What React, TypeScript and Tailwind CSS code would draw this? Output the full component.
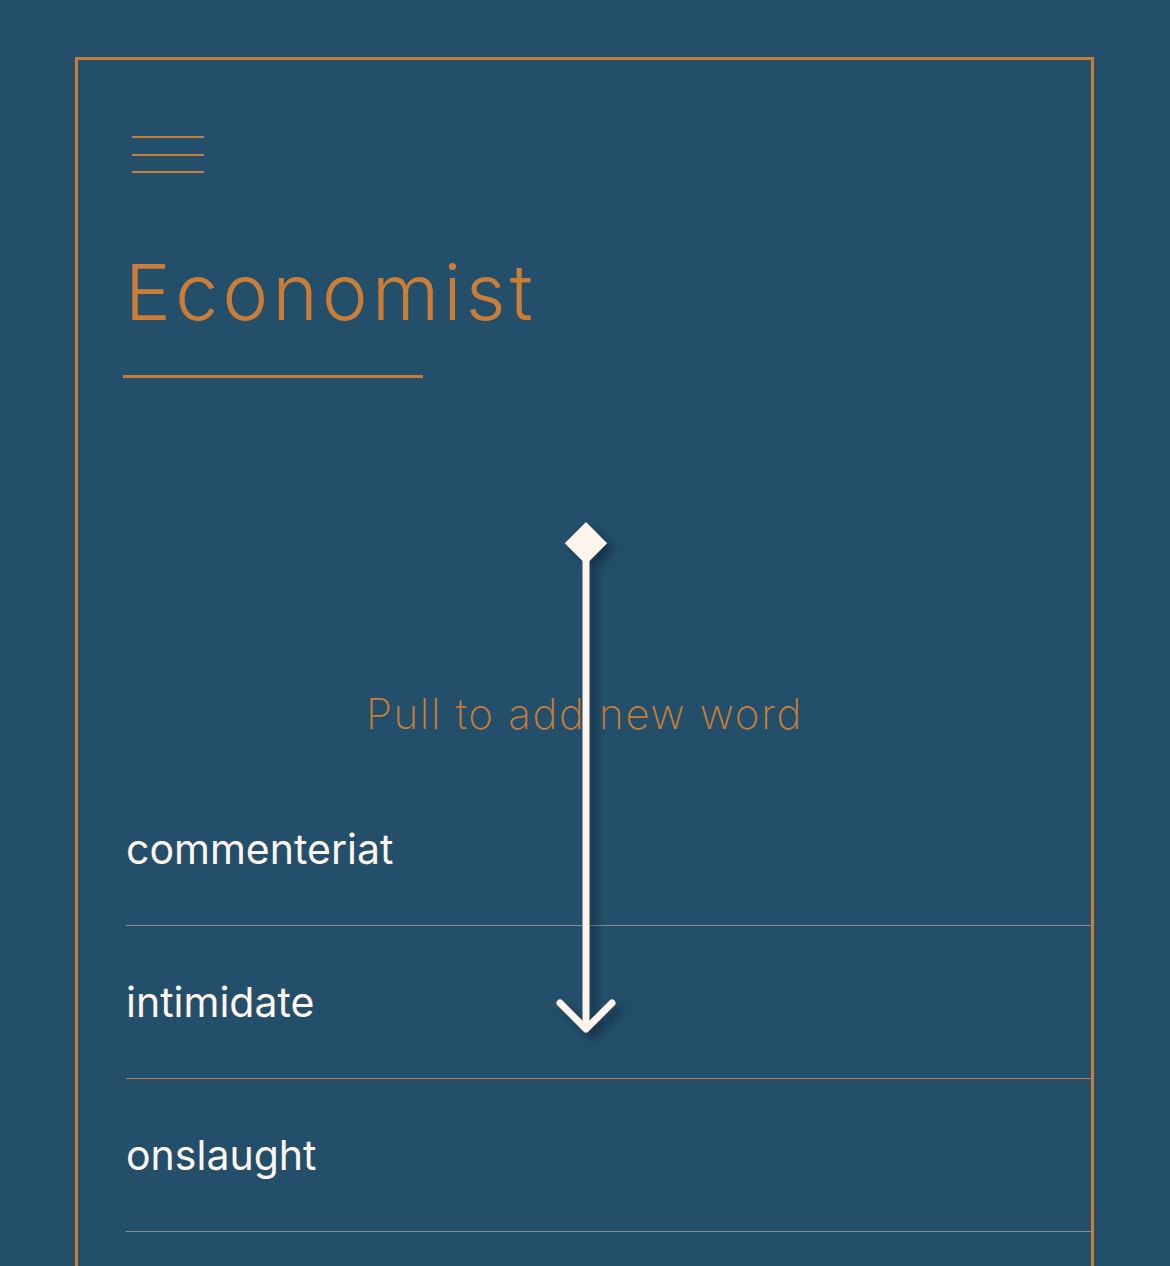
import React from 'react'

const words = [
  { text: 'commenteriat', line: 'bg-[#8a8f8e]' },
  { text: 'intimidate', line: 'bg-[#c97d37]' },
  { text: 'onslaught', line: 'bg-[#8a8f8e]' },
]

function PullArrow() {
  return (
    <svg
      className="absolute left-[473px] top-[460px] drop-shadow-[7px_6px_4px_rgba(10,30,45,0.55)]"
      width="70"
      height="520"
      viewBox="0 0 70 520"
      fill="none"
    >
      <rect x="35" y="2" width="30" height="30" transform="rotate(45 35 2)" fill="#fdf4ec" />
      <line x1="35" y1="30" x2="35" y2="508" stroke="#fdf4ec" strokeWidth="7" />
      <polyline
        points="9,483 35,509 61,483"
        stroke="#fdf4ec"
        strokeWidth="7"
        strokeLinecap="round"
        strokeLinejoin="round"
      />
    </svg>
  )
}

export default function App() {
  return (
    <div className="h-[1266px] overflow-hidden bg-[#244f6a] pt-[57px] pl-[75px] pr-[76px] font-['Inter',sans-serif]">
      <div className="relative min-h-[1300px] border-[3px] border-[#c97d37] pt-[76px]">
        <button className="ml-[54px] flex w-[72px] flex-col gap-[15.5px]">
          <span className="h-[2px] w-full bg-[#c97d37]" />
          <span className="h-[2px] w-full bg-[#c97d37]" />
          <span className="h-[2px] w-full bg-[#c97d37]" />
        </button>

        <h1 className="ml-[47px] mt-[81px] text-[77px] font-light leading-none tracking-[4.3px] text-[#c97d37]">
          Economist
        </h1>
        <div className="ml-[45px] mt-[44px] h-[3px] w-[300px] bg-[#c97d37]" />

        <p className="mt-[315px] text-center text-[42px] font-extralight leading-none tracking-[1.7px] text-[#c97d37]">
          Pull to add new word
        </p>

        <ul className="mt-[38px] pl-[48px]">
          {words.map((w) => (
            <li key={w.text} className="flex flex-col">
              <span className="flex h-[152px] items-center text-[41px] leading-none text-[#fdf5ee]">
                {w.text}
              </span>
              <span className={`h-px w-full ${w.line}`} />
            </li>
          ))}
        </ul>

        <PullArrow />
      </div>
    </div>
  )
}
